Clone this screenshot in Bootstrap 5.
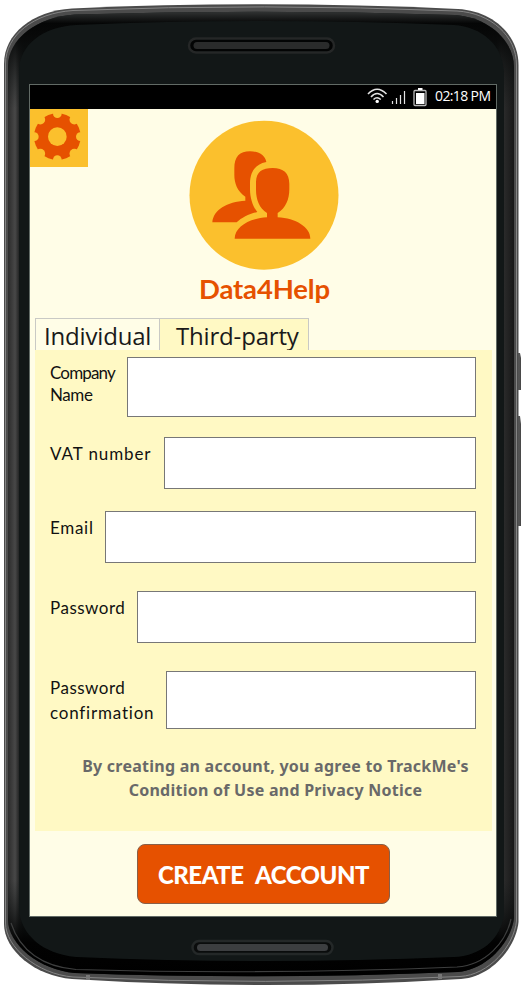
<!DOCTYPE html>
<html lang="en">
<head>
<meta charset="utf-8">
<meta name="viewport" content="width=device-width, initial-scale=1">
<title>Data4Help</title>
<link href="https://cdn.jsdelivr.net/npm/bootstrap@5.3.0/dist/css/bootstrap.min.css" rel="stylesheet">
<style>
body{background:#fff;color:#111;font-family:"Noto Sans","Open Sans",sans-serif}
.phone{width:528px;height:992px;padding:84px 31px 75px 29px}
.shell{z-index:0;width:528px;height:992px}
.screen{z-index:1;background:#fffde7;border:1px solid #626b66}
.status{height:24px;background:#000;color:#fff;padding-right:5px}
.clock{font:14px/22px "Open Sans",sans-serif;width:56px;letter-spacing:-.62px;white-space:nowrap}
.gear{width:58px;height:58px;background:#fbc02d;border:0;padding:0}
.hero{height:209px}
.avatar{margin:11px 0 0 101px}
.brand{font:700 27.5px/34px Lato,sans-serif;color:#e65100;margin:2px 0 0;letter-spacing:-.15px;width:130px;white-space:nowrap}
.tabs{padding-left:5px;height:32px;line-height:33px;font-size:24px}
.tabs .nav-link{border:1px solid #c9c9c5;border-bottom:0;border-radius:0;color:#1a1a1a;height:32px;padding:0;background:#fffde7;white-space:nowrap;font-family:"Open Sans",sans-serif;letter-spacing:-.18px}
.tabs .nav-link.active{background:#fff9c4;color:#1a1a1a;border-color:#c9c9c5;margin-left:-1px}
.t-ind{width:125px;padding-left:8px!important}
.t-third{width:150px;padding-left:16px!important}
.panel{background:#fff9c4;margin:0 4px 0 5px;height:481px;padding:7px 16px 0 15px}
.field label{font:17px/24px Lato,sans-serif;font-variant-ligatures:none;white-space:nowrap;flex:none;padding-top:5px}
.field .form-control{border:1px solid #777;border-radius:0;padding:0 8px;min-width:0;box-shadow:none}
.f1{height:60px}.f2,.f3,.f4{height:52px}.f5{height:58px}
.f1 label{width:77px;line-height:22px;letter-spacing:-.85px}.f2 label{width:114px;letter-spacing:.9px}.f3 label{width:55px;letter-spacing:.7px}.f4 label{width:87px;letter-spacing:.5px}.f5 label{width:116px;letter-spacing:.5px;line-height:25px;padding-top:4px}
.wide{letter-spacing:.8px}.name{letter-spacing:-.4px}
.f2{margin-top:20px}.f3{margin-top:22px}.f4{margin-top:28px}.f5{margin-top:28px}
.notice{font:700 16px/24px "Noto Sans",sans-serif;letter-spacing:.25px;color:#696969;margin:25px -10px 0 15px;white-space:nowrap}
.create{width:253px;height:60px;margin:13px 0 0 107px;background:#e65100;border:1.5px solid #886048;border-radius:8px;color:#fff;font:900 24px/59px Lato,sans-serif;letter-spacing:-.5px;word-spacing:7px;padding:0;white-space:nowrap}
.create:hover{background:#e65100;color:#fff}
</style>
</head>
<body>
<main class="phone position-relative d-flex overflow-hidden">
<svg class="shell position-absolute top-0 start-0" viewBox="0 0 528 992" aria-hidden="true">
<defs>
<linearGradient id="side" x1="0" x2="1" y1="0" y2="0"><stop offset="0" stop-color="#2c2c2c"/><stop offset=".014" stop-color="#484848"/><stop offset=".022" stop-color="#232424"/><stop offset=".03" stop-color="#121717"/><stop offset=".965" stop-color="#121717"/><stop offset=".974" stop-color="#303030"/><stop offset="1" stop-color="#181818"/></linearGradient>
<linearGradient id="ends" x1="0" x2="0" y1="0" y2="1"><stop offset="0" stop-color="#303232"/><stop offset=".012" stop-color="#050606"/><stop offset=".025" stop-color="#080909"/><stop offset=".1" stop-color="#121717" stop-opacity="0"/><stop offset=".9" stop-color="#121717" stop-opacity="0"/><stop offset=".965" stop-color="#020202"/><stop offset="1" stop-color="#000"/></linearGradient>
<linearGradient id="key" x1="0" x2="1" y1="0" y2="0"><stop offset="0" stop-color="#777"/><stop offset="1" stop-color="#444"/></linearGradient>
</defs>
<path d="M516 353h4l1 5v32h-5zM516 416h4l1 8v102h-5z" fill="url(#key)"/>
<path d="M4 64C4 34 32 11 72 8.500Q264 0 458 9C493 11 518.500 35 518.500 65V922C516 948 491 977 461 979Q264 991 72 979C35 976 4 950 4 924Z" fill="#4b4b4b"/>
<path d="M5.500 64C5.500 35 34 13 73 10.500Q264 3 457 11C491 13 516.500 36 516.500 65V921C514 946 489 975 460 976.500Q264 986 73 977C37 974 5.500 947 5.500 923Z" fill="none" stroke="#858585" stroke-width="1"/>
<path d="M8 66C8 39 37 17 75 14.500Q264 9 455 15C487 17 514 40 514 67V918C511 943 486 970 458 972Q264 980 75 973C39 970 8 944 8 920Z" fill="url(#side)"/>
<path d="M8 66C8 39 37 17 75 14.500Q264 9 455 15C487 17 514 40 514 67V918C511 943 486 970 458 972Q264 980 75 973C39 970 8 944 8 920Z" fill="url(#ends)"/>
<path d="M11 923C20 951 43 967 76 969.500Q264 975 457 967C486 965 506 942 511 919" fill="none" stroke="#3e3f3f" stroke-width="1.200"/>
<path d="M19 70C20 45 42 27 76 25Q264 17 454 25C482 27 503 45 504 72V914C501 940 480 956 454 957Q264 965 76 957C42 954 21 934 19 910Z" fill="#121717"/>
<path d="M88 975v5M440 974v5" stroke="#777" stroke-width="4"/>
<rect x="189" y="38.500" width="145" height="14" rx="7" fill="#030404" stroke="#252727" stroke-width="2.500"/>
<rect x="193.500" y="42" width="136" height="7" rx="3.500" fill="#2a2b2b"/>
<rect x="192.500" y="941" width="140" height="13" rx="6.500" fill="#0a0c0c" stroke="#242828" stroke-width="2.500"/>
<rect x="197" y="944" width="131" height="7" rx="3.500" fill="#3c3e40"/>
</svg>
<section class="screen position-relative d-flex flex-column flex-grow-1">
<header class="status d-flex justify-content-end">
<svg width="64" height="24" viewBox="0 0 64 24" fill="none" stroke="#e4e4e4" aria-hidden="true">
<path d="M1 9Q10-.5 19.500 9" stroke-width="1.600"/><path d="M4 12Q10 5 16.500 12M6.500 14.500Q10 11 13.800 14.500" stroke-width="1.500"/><circle cx="10.200" cy="16.400" r="1.700" fill="#fff" stroke="none"/>
<path d="M25.500 16v3M29.500 13v6M33.500 10v9M37.500 6v13" stroke-width="1.200"/>
<rect x="47" y="5.500" width="12" height="15" rx="1" stroke="#bbb" stroke-width="1.300"/><path d="M49 8h8.500v11H49zM51 3h4.500v2H51z" fill="#fff" stroke="none"/>
</svg>
<span class="clock ms-1">02:18 PM</span>
</header>
<div class="hero d-flex align-items-start">
<button class="gear btn rounded-0" aria-label="Settings"><svg class="d-block" width="58" height="58" viewBox="15 86 174 174"><circle cx="97" cy="169" r="70" fill="#e65100"/><g fill="#fbc02d"><circle cx="97" cy="169" r="28"/><circle cx="97" cy="100" r="13"/><circle cx="97" cy="238" r="13"/><circle cx="28" cy="169" r="13"/><circle cx="166" cy="169" r="13"/><circle cx="46" cy="118" r="14.500"/><circle cx="148" cy="118" r="14.500"/><circle cx="46" cy="220" r="14.500"/><circle cx="148" cy="220" r="14.500"/></g></svg></button>
<div class="avatar d-flex flex-column align-items-center"><svg width="150" height="150" viewBox="26 29 450 450" role="img" aria-label="Two people"><circle cx="251" cy="254.500" r="223.500" fill="#fbc02d"/><g fill="#e65100"><path d="M96 336C99 298 140 274 195 271V259C170 243 162 217 162 194V174C162 139 178 123 209 123C237 123 254 135 258 155C224 162 210 184 209 218V236C209 265 218 289 231 305C207 310 184 322 169 336Z"/><path d="M163 385C164 349 206 324 260 321V308C237 294 227 267 227 239V214C228 184 246 173 277 173C309 173 327 188 327 220V237C327 267 316 294 292 308V321C346 324 390 350 390 385Z"/></g></svg>
<h1 class="brand">Data4Help</h1></div>
</div>
<nav class="tabs nav nav-tabs border-0 flex-nowrap"><a class="nav-link t-ind" href="#">Individual</a><a class="nav-link active t-third" href="#">Third-party</a></nav>
<form class="panel">
<div class="field f1 d-flex"><label for="company">Company<br><span class="name">Name</span></label><input id="company" class="form-control"></div>
<div class="field f2 d-flex"><label for="vat">VAT number</label><input id="vat" class="form-control"></div>
<div class="field f3 d-flex"><label for="email">Email</label><input id="email" class="form-control"></div>
<div class="field f4 d-flex"><label for="pass">Password</label><input id="pass" type="password" class="form-control"></div>
<div class="field f5 d-flex"><label for="confirm">Password<br><span class="wide">confirmation</span></label><input id="confirm" type="password" class="form-control"></div>
<p class="notice text-center">By creating an account, you agree to TrackMe's<br>Condition of Use and Privacy Notice</p>
</form>
<button class="create btn">CREATE ACCOUNT</button>
</section>
</main>
<script src="https://cdn.jsdelivr.net/npm/bootstrap@5.3.0/dist/js/bootstrap.bundle.min.js"></script>
</body>
</html>
